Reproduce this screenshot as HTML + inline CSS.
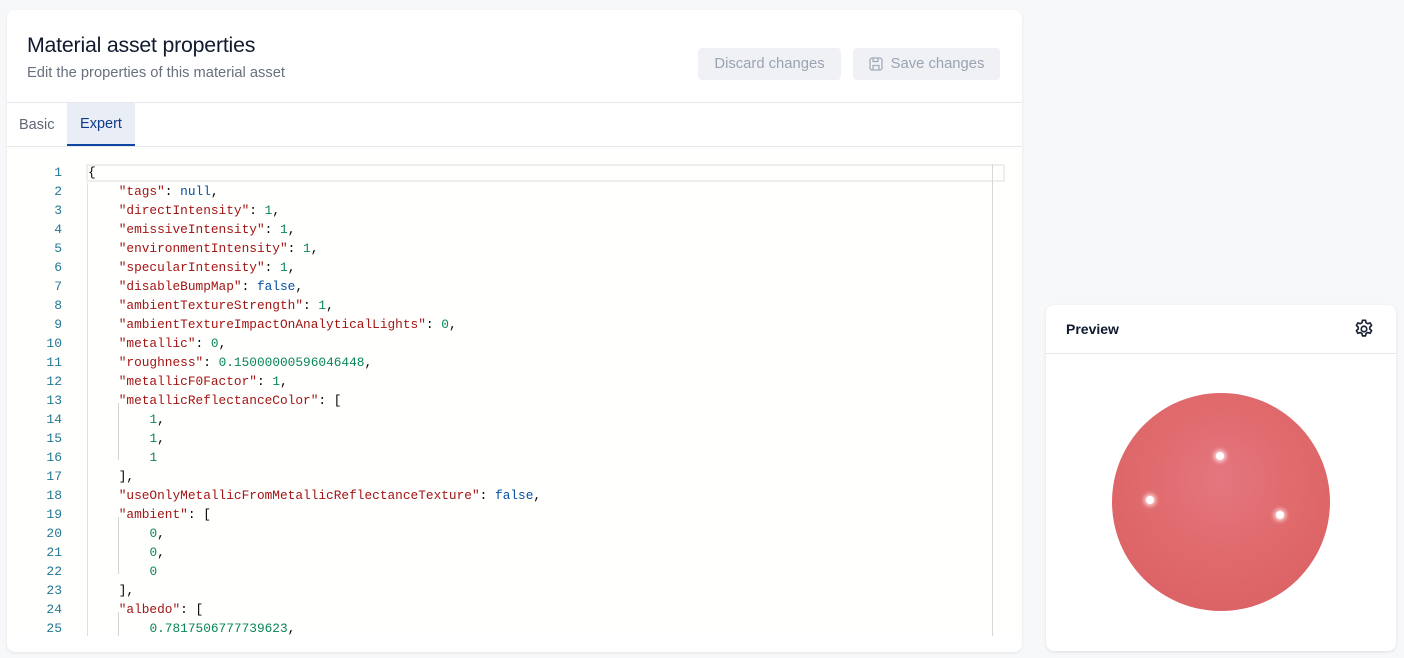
<!DOCTYPE html>
<html><head><meta charset="utf-8"><style>
*{box-sizing:border-box;margin:0;padding:0}
body{width:1404px;height:658px;background:#f7f8fa;font-family:"Liberation Sans",sans-serif;position:relative;overflow:hidden}
.card{position:absolute;left:7px;top:10px;width:1015px;height:642px;background:#fff;border-radius:8px;box-shadow:0 1px 3px rgba(0,0,0,.08);overflow:hidden}
h1{position:absolute;left:20px;top:23px;font-size:21.3px;font-weight:400;color:#0f1a2e;letter-spacing:-.2px}
.sub{position:absolute;left:20px;top:55px;font-size:14.7px;color:#68707d}
.btn{position:absolute;top:38px;height:32px;background:#eff1f5;border-radius:4px;color:#9aa3b4;font-size:14.8px;line-height:33px;text-align:center}
.hr{position:absolute;left:0;width:1015px;height:1px;background:#e6e8ec}
.tab{position:absolute;height:43px;line-height:31px;font-size:14.5px;color:#5f6675}
.code{position:absolute;left:0;top:137px;width:1015px;height:489px;background:#fffffe;overflow:hidden}
.ln{position:absolute;left:0;width:55px;text-align:right;font-family:"Liberation Mono",monospace;font-size:13px;color:#237893}
.cl{position:absolute;left:81px;white-space:pre;font-family:"Liberation Mono",monospace;font-size:12.8px;color:#000}
.k{color:#a31515}.n{color:#098658}.b{color:#0451a5}
.g{position:absolute;width:1px;background:#d3d3d3}
.prev{position:absolute;left:1046px;top:305px;width:350px;height:346px;background:#fff;border-radius:8px;box-shadow:0 1px 3px rgba(0,0,0,.1);overflow:hidden}
</style></head><body>
<div class="card">
<h1>Material asset properties</h1>
<div class="sub">Edit the properties of this material asset</div>
<div class="btn" style="left:691px;width:143px">Discard changes</div>
<div class="btn" style="left:846px;width:147px;padding-left:22px">
<svg style="position:absolute;left:16px;top:9px" width="14" height="14" viewBox="0 0 14 14" fill="none" stroke="#a4acbb" stroke-width="1.3"><rect x="1" y="1" width="12" height="12" rx="2"/><path d="M4 1v3.5h5V1M4 13V8.5h6V13"/></svg>Save changes</div>
<div class="hr" style="top:92px"></div>
<div class="tab" style="left:12px;top:100px">Basic</div>
<div style="position:absolute;left:60px;top:93px;width:68px;height:43px;background:#e9edf5;border-bottom:2px solid #0d47a1;color:#103a8a;font-size:14.5px;text-align:center;line-height:43px">Expert</div>
<div class="hr" style="top:136px"></div>
<div class="code">
<div style="position:absolute;left:79px;top:17px;width:919px;height:18px;border:2px solid #eeeeee"></div>
<div class="g" style="left:985px;top:17px;height:488px;background:#d8d8d8"></div>
<div class="g" style="left:80px;top:36px;height:469px;background:#e0e0e0"></div>
<div class="g" style="left:111px;top:256px;height:57px"></div>
<div class="g" style="left:111px;top:370px;height:57px"></div>
<div class="g" style="left:111px;top:465px;height:40px"></div>
<div id="lines"></div>
</div>
</div>
<div class="prev">
<div style="position:absolute;left:20px;top:16px;font-size:14px;font-weight:700;color:#0f1a2e">Preview</div>
<svg style="position:absolute;left:307px;top:13px" width="22" height="22" viewBox="0 0 24 24" fill="none" stroke="#1a2233" stroke-width="1.8" stroke-linejoin="round"><path d="M10.3 2.5h3.4l.5 2.6 1.9 1.1 2.5-.9 1.7 2.9-2 1.7v2.2l2 1.7-1.7 2.9-2.5-.9-1.9 1.1-.5 2.6h-3.4l-.5-2.6-1.900-1.1-2.5.9-1.7-2.9 2-1.7v-2.2l-2-1.7 1.7-2.9 2.5.9 1.9-1.1z"/><circle cx="12" cy="12" r="3"/></svg>
<div style="position:absolute;left:0;top:48px;width:350px;height:1px;background:#e6e8ec"></div>
<div style="position:absolute;left:66px;top:88px;width:218px;height:218px;border-radius:50%;background:radial-gradient(circle at 50% 40%,#e47680 0%,#e06a6c 45%,#db6264 82%,#c56a70 100%)"></div>
<div style="position:absolute;left:170px;top:147px;width:8px;height:8px;border-radius:50%;background:#fff;box-shadow:0 0 4px 2px #ffd9d9"></div>
<div style="position:absolute;left:100px;top:191px;width:8px;height:8px;border-radius:50%;background:#fff;box-shadow:0 0 4px 2px #ffd9d9"></div>
<div style="position:absolute;left:230px;top:206px;width:8px;height:8px;border-radius:50%;background:#fff;box-shadow:0 0 4px 2px #ffd9d9"></div>
</div>
<script>
var L=[
'<span>{</span>',
'    <span class="k">"tags"</span>: <span class="b">null</span>,',
'    <span class="k">"directIntensity"</span>: <span class="n">1</span>,',
'    <span class="k">"emissiveIntensity"</span>: <span class="n">1</span>,',
'    <span class="k">"environmentIntensity"</span>: <span class="n">1</span>,',
'    <span class="k">"specularIntensity"</span>: <span class="n">1</span>,',
'    <span class="k">"disableBumpMap"</span>: <span class="b">false</span>,',
'    <span class="k">"ambientTextureStrength"</span>: <span class="n">1</span>,',
'    <span class="k">"ambientTextureImpactOnAnalyticalLights"</span>: <span class="n">0</span>,',
'    <span class="k">"metallic"</span>: <span class="n">0</span>,',
'    <span class="k">"roughness"</span>: <span class="n">0.15000000596046448</span>,',
'    <span class="k">"metallicF0Factor"</span>: <span class="n">1</span>,',
'    <span class="k">"metallicReflectanceColor"</span>: [',
'        <span class="n">1</span>,',
'        <span class="n">1</span>,',
'        <span class="n">1</span>',
'    ],',
'    <span class="k">"useOnlyMetallicFromMetallicReflectanceTexture"</span>: <span class="b">false</span>,',
'    <span class="k">"ambient"</span>: [',
'        <span class="n">0</span>,',
'        <span class="n">0</span>,',
'        <span class="n">0</span>',
'    ],',
'    <span class="k">"albedo"</span>: [',
'        <span class="n">0.7817506777739623</span>,'];
var h='';for(var i=0;i<L.length;i++){var t=18+i*19;h+='<div class="ln" style="top:'+t+'px">'+(i+1)+'</div><div class="cl" style="top:'+t+'px">'+L[i]+'</div>';}
document.getElementById('lines').innerHTML=h;
</script>
</body></html>
